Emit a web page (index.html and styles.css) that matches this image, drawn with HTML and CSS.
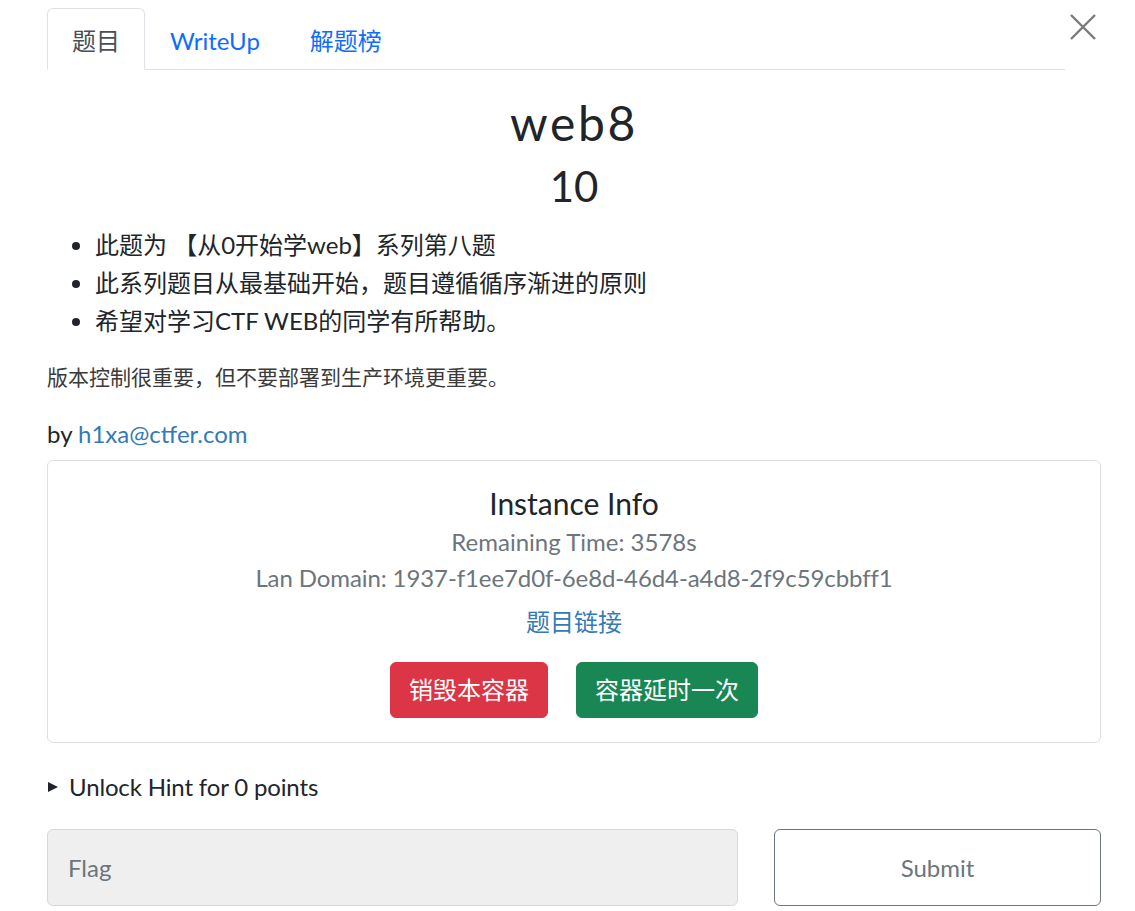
FILE: index.html
```html
<!DOCTYPE html>
<html lang="zh">
<head>
<meta charset="utf-8">
<title>web8</title>
<link rel="stylesheet" href="styles.css">
</head>
<body>
<div class="modal">
  <div class="modal-head">
    <ul class="tabs">
      <li class="tab active">题目</li>
      <li class="tab">WriteUp</li>
      <li class="tab">解题榜</li>
    </ul>
    <button class="close" aria-label="Close">
      <svg width="26" height="26" viewBox="0 0 26 26"><path d="M1 1L25 25M25 1L1 25" stroke="#7a7a7a" stroke-width="2.4" fill="none"/></svg>
    </button>
  </div>

  <h2 class="chal-name">web8</h2>
  <h3 class="chal-value">10</h3>

  <ul class="desc-list">
    <li>此题为 【从0开始学web】系列第八题</li>
    <li>此系列题目从最基础开始，题目遵循循序渐进的原则</li>
    <li>希望对学习CTF WEB的同学有所帮助。</li>
  </ul>
  <p class="note">版本控制很重要，但不要部署到生产环境更重要。</p>
  <p class="author">by <a class="link" href="#">h1xa@ctfer.com</a></p>

  <div class="card">
    <h5 class="card-title">Instance Info</h5>
    <p class="muted">Remaining Time: 3578s</p>
    <p class="muted domain">Lan Domain: 1937-f1ee7d0f-6e8d-46d4-a4d8-2f9c59cbbff1</p>
    <a class="link chal-link" href="#">题目链接</a>
    <div class="btns">
      <button class="btn btn-red">销毁本容器</button>
      <button class="btn btn-green">容器延时一次</button>
    </div>
  </div>

  <details class="hint">
    <summary>Unlock Hint for 0 points</summary>
  </details>

  <div class="submit-row">
    <input class="flag-input" type="text" placeholder="Flag">
    <button class="submit-btn">Submit</button>
  </div>
</div>
</body>
</html>
```

FILE: styles.css
```css
* { box-sizing: border-box; }
html, body { margin: 0; padding: 0; background: #fff; }
body {
  font-family: Lato, "Noto Sans CJK SC", sans-serif;
  font-size: 24px;
  line-height: 36px;
  color: #212529;
}
.modal {
  width: 1054px;
  margin-left: 47px;
  padding-top: 8px;
}
.modal-head {
  display: flex;
  align-items: flex-start;
}
.tabs {
  flex: 1;
  display: flex;
  list-style: none;
  margin: 0;
  padding: 0;
  border-bottom: 1px solid #dee2e6;
}
.tab {
  padding: 14px 24px 10px;
  line-height: 36px;
  color: #0d6efd;
  border: 1px solid transparent;
  border-top-left-radius: 6px;
  border-top-right-radius: 6px;
  margin-bottom: -1px;
}
.tab.active {
  color: #495057;
  background: #fff;
  border-color: #dee2e6 #dee2e6 #fff;
}
.close {
  width: 36px;
  height: 40px;
  border: 0;
  background: none;
  padding: 0;
  display: flex;
  align-items: center;
  justify-content: center;
  margin-top: -1px;
}
.chal-name {
  margin: 24px 0 0;
  text-align: center;
  font-weight: 400;
  font-size: 48px;
  line-height: 57px;
  letter-spacing: 2.6px;
}
.chal-value {
  margin: 10px 0 0;
  text-align: center;
  font-weight: 400;
  font-size: 42px;
  line-height: 50px;
}
.desc-list {
  margin: 15px 0 0;
  padding-left: 48px;
}
.desc-list li {
  line-height: 38px;
}
.note {
  margin: 21px 0 0;
  font-size: 21px;
  line-height: 32px;
  color: #3a3a3a;
}
.author {
  margin: 23px 0 0;
}
.link {
  color: #337ab7;
  text-decoration: none;
}
.card {
  margin-top: 8px;
  border: 1px solid #dfdfdf;
  border-radius: 6px;
  padding: 24px 24px 24px;
  display: flex;
  flex-direction: column;
  align-items: center;
  text-align: center;
}
.card-title {
  margin: 0 0 3px;
  font-size: 30px;
  font-weight: 400;
  line-height: 36px;
}
.muted {
  margin: 0;
  color: #6c757d;
}
.muted.domain { letter-spacing: -0.1px; }
.chal-link {
  margin-top: 8px;
}
.btns {
  margin-top: 22px;
  display: flex;
  gap: 28px;
}
.btn {
  font-family: Lato, "Noto Sans CJK SC", sans-serif;
  font-size: 24px;
  line-height: 36px;
  padding: 9px 18px;
  border: 1px solid transparent;
  border-radius: 6px;
  color: #fff;
}
.btn-red { background: #dc3545; border-color: #dc3545; }
.btn-green { background: #198754; border-color: #198754; }
.hint {
  margin-top: 26px;
}
.hint summary {
  cursor: pointer;
  list-style: none;
  display: flex;
  align-items: center;
  letter-spacing: -0.15px;
}
.hint summary::-webkit-details-marker { display: none; }
.hint summary::before {
  content: "";
  width: 0;
  height: 0;
  border-left: 10px solid #212529;
  border-top: 5.5px solid transparent;
  border-bottom: 5.5px solid transparent;
  margin: 0 11px 0 1px;
}
.submit-row {
  margin-top: 24px;
  display: grid;
  grid-template-columns: 691fr 327fr;
  column-gap: 36px;
}
.flag-input {
  height: 77px;
  padding: 0 20px;
  font-family: Lato, "Noto Sans CJK SC", sans-serif;
  font-size: 24px;
  color: #495057;
  background: #efefef;
  border: 1px solid #d6d8da;
  border-radius: 6px;
  outline: none;
}
.flag-input::placeholder { color: #6c757d; }
.submit-btn {
  height: 77px;
  font-family: Lato, "Noto Sans CJK SC", sans-serif;
  font-size: 24px;
  color: #6c757d;
  background: #fff;
  border: 1px solid #6c757d;
  border-radius: 6px;
}
```
